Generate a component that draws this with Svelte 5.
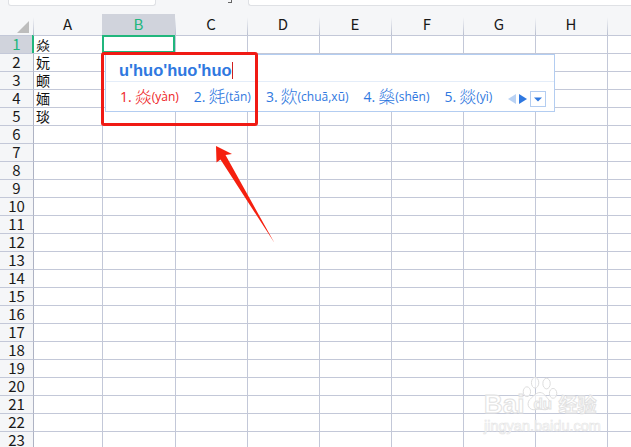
<script>
  const columns = [
    { name: 'A', width: 69 },
    { name: 'B', width: 73 },
    { name: 'C', width: 72 },
    { name: 'D', width: 72 },
    { name: 'E', width: 72 },
    { name: 'F', width: 72 },
    { name: 'G', width: 72 },
    { name: 'H', width: 72 },
    { name: '', width: 25 }
  ];
  const cellText = ['焱', '妧', '𬱖', '媔', '琰'];
  const rows = Array.from({ length: 23 }, (_, i) => i + 1);
  const candidates = [
    { n: '1.', word: '焱', pinyin: '(yàn)', active: true },
    { n: '2.', word: '㲜', pinyin: '(tǎn)' },
    { n: '3.', word: '欻', pinyin: '(chuā,xū)' },
    { n: '4.', word: '燊', pinyin: '(shēn)' },
    { n: '5.', word: '燚', pinyin: '(yì)' }
  ];
  const gridCols = '33px ' + columns.map((c) => c.width + 'px').join(' ');
</script>

<div class="screen">
  <!-- toolbar remains at top -->
  <div class="formula-bar">
    <div class="name-box"></div>
    <span class="chevron"></span>
    <div class="formula-input"></div>
  </div>

  <div class="sheet" style="grid-template-columns: {gridCols}">
    <div class="corner"><span class="corner-mark"></span></div>
    {#each columns as col}
      <div class="col-head" class:selected={col.name === 'B'}>{col.name}</div>
    {/each}

    {#each rows as row}
      <div class="row-head" class:selected={row === 1}>{row}</div>
      {#each columns as col}
        <div
          class="cell"
          class:first={col.name === 'A'}
          class:current={row === 1 && col.name === 'B'}
          class:beside={row === 1 && col.name === 'A'}
        >
          {#if col.name === 'A' && cellText[row - 1]}{cellText[row - 1]}{/if}
        </div>
      {/each}
    {/each}
  </div>

  <!-- IME popup -->
  <div class="ime">
    <div class="ime-input">u'huo'huo'huo<span class="caret"></span></div>
    <div class="ime-list">
      {#each candidates as c}
        <div class="cand" class:active={c.active}>
          <span class="num">{c.n}</span><span class="word">{c.word}</span><span class="py">{c.pinyin}</span>
        </div>
      {/each}
      <div class="pager">
        <svg width="40" height="16" viewBox="0 0 40 16">
          <path d="M9 3v10L1 8z" fill="#b9d2f4" />
          <path d="M12 3v10l8-5z" fill="#2f78e0" />
          <rect x="23.5" y="0.5" width="15" height="15" fill="#fff" stroke="#b3cdf1" />
          <path d="M27 6.5h8l-4 4z" fill="#2f78e0" />
        </svg>
      </div>
    </div>
  </div>

  <div class="red-box"></div>

  <svg class="arrow" width="631" height="447" viewBox="0 0 631 447">
    <path d="M216 146 232 154 225.500 155 274.500 243 220.500 159.500 216.500 162.500z" fill="#f5200f" />
  </svg>

  <!-- watermark -->
  <div class="mark">
    <div class="mark-top">
      <span class="mark-bai">Bai</span>
      <svg class="paw" width="36" height="38" viewBox="0 0 44 46">
        <g fill="rgba(255,255,255,.65)" stroke="#dcdcdc" stroke-width="1.200">
          <ellipse cx="6" cy="19" rx="4.500" ry="6" />
          <ellipse cx="16" cy="8" rx="4.500" ry="6.500" />
          <ellipse cx="30" cy="9" rx="4.500" ry="6.500" />
          <ellipse cx="38" cy="21" rx="4.500" ry="6" />
          <path d="M22 20c5 0 7 5 11 9 4 5 1 13-6 12-3 0-7-2-11 0-7 1-11-6-7-12 4-3 7-9 13-9z" />
        </g>
      </svg>
      <span class="mark-du">du</span>
      <span class="mark-jy">经验</span>
    </div>
    <div class="mark-url">jingyan.baidu.com</div>
  </div>
</div>

<style>
  :global(body) {
    margin: 0;
    background: #fff;
  }

  .screen {
    position: relative;
    width: 631px;
    height: 447px;
    overflow: hidden;
    background: #fff;
    font-family: 'Noto Sans CJK SC', 'Noto Sans', sans-serif;
  }

  .formula-bar {
    display: flex;
    height: 14px;
    background: #f5f6f8;
    padding-left: 8px;
    box-sizing: border-box;
  }

  .name-box {
    width: 148px;
    height: 6px;
    background: #fff;
    border: 1px solid #dfe1e5;
    border-top: 0;
    border-radius: 0 0 3px 3px;
    box-sizing: border-box;
  }

  .chevron {
    width: 3px;
    height: 2px;
    margin-left: 72px;
    border-right: 1px solid #666;
    border-bottom: 1px solid #666;
  }

  .formula-input {
    flex: 1;
    height: 6px;
    margin-left: 16px;
    background: #fff;
    border: 1px solid #dfe1e5;
    border-top: 0;
    border-right: 0;
    border-radius: 0 0 0 3px;
    box-sizing: border-box;
  }

  .sheet {
    display: grid;
    grid-auto-rows: 18px;
    grid-template-rows: 21px;
  }

  .corner {
    background: #f5f6f8;
    box-sizing: border-box;
    display: flex;
    align-items: flex-end;
    justify-content: flex-end;
    padding: 0 4px 2px 0;
  }

  .corner-mark {
    width: 0;
    height: 0;
    border-left: 12px solid transparent;
    border-bottom: 12px solid #bdbdbd;
  }

  .col-head {
    background: linear-gradient(to bottom, transparent 15%, #b9bfd0) left / 1px 100% no-repeat, #f5f6f8;
    font-size: 15px;
    line-height: 20px;
    text-align: center;
    color: #1a1a1a;
  }

  .col-head.selected {
    background: #d0d3dc;
    color: #21b67d;
  }

  .row-head {
    background: #f5f6f8;
    border-top: 1px solid #c3c8d8;
    box-sizing: border-box;
    font-size: 15px;
    line-height: 16px;
    text-align: center;
    color: #1a1a1a;
  }

  .row-head.selected {
    background: #d0d3dc;
    color: #21b67d;
  }

  .cell {
    border-top: 1px solid #c3c8d8;
    border-left: 1px solid #c3c8d8;
    box-sizing: border-box;
    padding-left: 2px;
    font-size: 14px;
    line-height: 17px;
    color: #111;
    white-space: nowrap;
    font-family: 'Noto Sans CJK SC', 'Noto Sans CJK JP', sans-serif;
  }

  .cell.first {
    border-left-color: #aeb3c4;
  }

  .cell.beside {
    border-left-color: #21b67d;
    box-shadow: -1px 0 0 #21b67d;
  }

  .cell.current {
    outline: 2px solid #21b67d;
    outline-offset: -2px;
    border-color: transparent;
    position: relative;
  }

  .ime {
    position: absolute;
    left: 105px;
    top: 54px;
    width: 450px;
    height: 58px;
    box-sizing: border-box;
    background: #fff;
    border: 1px solid #b3cdf1;
    color: #2f78e0;
  }

  .ime-input {
    height: 27px;
    box-sizing: border-box;
    border-bottom: 1px solid #e4edf9;
    padding: 4px 0 0 13px;
    font-family: 'Liberation Sans', sans-serif;
    font-size: 16.500px;
    font-weight: 700;
    line-height: 20px;
    display: flex;
    align-items: center;
  }

  .caret {
    display: inline-block;
    width: 1px;
    height: 17px;
    background: #d02020;
  }

  .ime-list {
    display: flex;
    align-items: center;
    height: 28px;
    padding-left: 14px;
  }

  .cand {
    display: flex;
    align-items: center;
    margin-right: 15px;
    white-space: nowrap;
  }

  .cand.active {
    color: #ee1c25;
  }

  .num {
    font-family: 'Open Sans', sans-serif;
    font-size: 14px;
    margin-right: 3px;
  }

  .word {
    font-size: 17px;
    line-height: 20px;
    font-family: 'Noto Sans CJK SC', 'Noto Sans CJK JP', sans-serif;
    font-weight: 300;
  }

  .py {
    font-family: 'Open Sans', sans-serif;
    font-size: 12px;
  }

  .pager {
    margin-left: auto;
    margin-right: 11px;
    height: 16px;
  }

  .red-box {
    position: absolute;
    left: 101px;
    top: 52px;
    width: 157px;
    height: 74px;
    box-sizing: border-box;
    border: 3px solid #f01a14;
    border-radius: 3px;
  }

  .arrow {
    position: absolute;
    left: 0;
    top: 0;
  }

  .mark {
    position: absolute;
    left: 484px;
    top: 377px;
    width: 115px;
    color: rgba(255, 255, 255, 0.75);
    -webkit-text-stroke: 1px #e2e2e2;
    font-family: 'Liberation Sans', sans-serif;
  }

  .mark-top {
    display: flex;
    align-items: flex-end;
    height: 37px;
    line-height: 20px;
  }

  .mark-bai {
    font-size: 26px;
    font-weight: 700;
  }

  .paw {
    flex: none;
    margin: 0 -25px 0 -2px;
  }

  .mark-du {
    font-size: 15px;
    font-weight: 700;
    width: 25px;
    flex: none;
  }

  .mark-jy {
    font-family: 'Noto Sans CJK SC', sans-serif;
    font-size: 19px;
    font-weight: 700;
    white-space: nowrap;
  }

  .mark-url {
    margin-top: 5px;
    font-size: 14.500px;
    line-height: 14px;
    -webkit-text-stroke: 0.6px #e4e4e4;
    white-space: nowrap;
  }
</style>
